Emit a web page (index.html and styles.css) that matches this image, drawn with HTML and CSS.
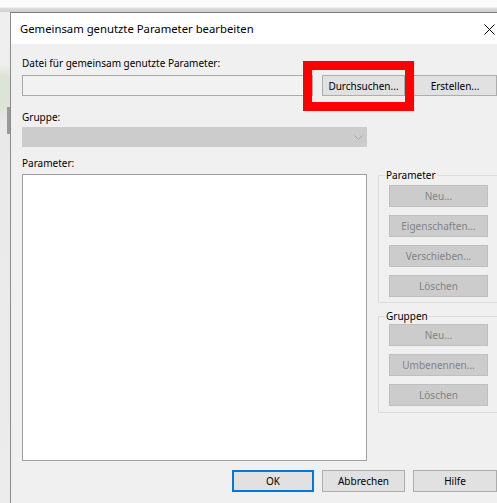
FILE: index.html
```html
<!DOCTYPE html>
<html lang="de">
<head>
<meta charset="utf-8">
<title>Gemeinsam genutzte Parameter bearbeiten</title>
<link rel="stylesheet" href="styles.css">
</head>
<body>
<div class="desk">
  <div class="desk-top"></div>
  <div class="desk-row">
    <div class="desk-side"></div>
    <div class="dialog">
      <div class="titlebar">
        <span class="title">Gemeinsam genutzte Parameter bearbeiten</span>
        <svg class="close" width="11" height="11" viewBox="0 0 11 11" aria-hidden="true">
          <path d="M0.5 0.5 L10.5 10.5 M10.5 0.5 L0.5 10.5" stroke="#000" stroke-width="1" fill="none"/>
        </svg>
      </div>
      <div class="content">
        <div class="label label-file">Datei für gemeinsam genutzte Parameter:</div>
        <div class="file-row">
          <div class="field"></div>
          <div class="btn-mark">
            <button class="btn btn-browse">Durchsuchen...</button>
            <span class="highlight"></span>
          </div>
          <button class="btn btn-create">Erstellen...</button>
        </div>
        <div class="main">
          <div class="left">
            <div class="label label-group">Gruppe:</div>
            <div class="combo">
              <svg class="chevron" width="9" height="5" viewBox="0 0 9 5" aria-hidden="true">
                <path d="M0.5 0.5 L4.5 4.5 L8.5 0.5" stroke="#a6a6a6" stroke-width="1" fill="none"/>
              </svg>
            </div>
            <div class="label label-param">Parameter:</div>
            <div class="listbox"></div>
          </div>
          <div class="right">
            <fieldset class="group group-params">
              <legend>Parameter</legend>
              <button class="btn btn-side" disabled>Neu...</button>
              <button class="btn btn-side" disabled>Eigenschaften...</button>
              <button class="btn btn-side" disabled>Verschieben...</button>
              <button class="btn btn-side" disabled>Löschen</button>
            </fieldset>
            <fieldset class="group group-groups">
              <legend>Gruppen</legend>
              <button class="btn btn-side" disabled>Neu...</button>
              <button class="btn btn-side" disabled>Umbenennen...</button>
              <button class="btn btn-side" disabled>Löschen</button>
            </fieldset>
          </div>
        </div>
        <div class="footer">
          <button class="btn btn-ok">OK</button>
          <button class="btn btn-cancel">Abbrechen</button>
          <button class="btn btn-help">Hilfe</button>
        </div>
      </div>
    </div>
  </div>
</div>
</body>
</html>
```

FILE: styles.css
```css
html, body {
  margin: 0;
  padding: 0;
}

body {
  width: 497px;
  height: 503px;
  overflow: hidden;
  background: #f3f3f3;
  font-family: "Noto Sans", "DejaVu Sans", sans-serif;
  font-size: 10px;
  color: #000;
}

.desk {
  display: flex;
  flex-direction: column;
  height: 503px;
}

.desk-top {
  height: 12px;
  flex: none;
  background: linear-gradient(to bottom, #fbfbfb 0, #fbfbfb 7px, #dedede 8px, #d2d2d2 11px, #cfcfcf 12px);
}

.desk-row {
  display: flex;
  flex: 1;
}

.desk-side {
  width: 10px;
  flex: none;
  background:
    linear-gradient(to bottom, transparent 0, transparent 95px, #9a9a9a 95px, #9a9a9a 122px, transparent 122px) 7px 0 / 3px 100% no-repeat,
    linear-gradient(to bottom, #efefef 0, #efefef 52px, #dde3d6 64px, #dde3d6 95px, #e9e9e9 110px, #ececec 100%);
}

.dialog {
  width: 486px;
  flex: none;
  border-left: 1px solid #8b8b8b;
  border-top: 1px solid #7d7d7d;
  background: #f0f0f0;
  display: flex;
  flex-direction: column;
}

.titlebar {
  height: 31px;
  flex: none;
  background: #fff;
  display: flex;
  align-items: center;
  justify-content: space-between;
  padding: 0 2px 0 9px;
}

.title {
  font-size: 11.3px;
  color: #000;
}

.close {
  display: block;
  margin-top: 1px;
}

.content {
  padding-left: 11px;
  display: flex;
  flex-direction: column;
}

.label {
  height: 16px;
  line-height: 16px;
  white-space: nowrap;
}

.label-file {
  margin-top: 11px;
}

.file-row {
  display: flex;
  margin-top: 4px;
  height: 21px;
}

.field {
  width: 289px;
  height: 19px;
  border: 1px solid #a9a9a9;
  background: #f2f2f2;
}

.btn {
  font-family: inherit;
  font-size: 10px;
  color: #000;
  background: #e1e1e1;
  border: 1px solid #adadad;
  border-radius: 0;
  padding: 0;
  margin: 0;
  height: 22px;
  box-sizing: border-box;
  white-space: nowrap;
}

.btn-mark {
  position: relative;
  margin-left: 9px;
  display: flex;
}

.btn-browse {
  width: 83px;
  height: 21px;
}

.highlight {
  position: absolute;
  left: -19px;
  top: -14px;
  width: 111px;
  height: 50px;
  box-sizing: border-box;
  border: 9px solid #ff0000;
  pointer-events: none;
}

.btn-create {
  width: 84px;
  height: 21px;
  margin-left: 8px;
}

.main {
  display: flex;
  gap: 11px;
}

.left {
  width: 345px;
  display: flex;
  flex-direction: column;
}

.label-group {
  margin-top: 13px;
}

.combo {
  margin-top: 2px;
  height: 20px;
  background: #cccccc;
  display: flex;
  align-items: center;
  justify-content: flex-end;
  padding-right: 4px;
}

.chevron {
  display: block;
  margin-top: 1px;
}

.label-param {
  margin-top: 8px;
}

.listbox {
  margin-top: 3px;
  height: 285px;
  background: #fff;
  border: 1px solid #a0a0a0;
}

.right {
  width: 119px;
  margin-top: 71px;
  display: flex;
  flex-direction: column;
}

.group {
  margin: 0;
  padding: 2px 0 5px 10px;
  border: 1px solid #dcdcdc;
  border-right: 0;
  min-width: 0;
  display: flex;
  flex-direction: column;
  gap: 8px;
}

.group legend {
  padding: 0 1px;
  margin-left: -4px;
  height: 16px;
  line-height: 16px;
  font-size: 10px;
}

.group-groups {
  margin-top: 5px;
  padding-top: 0;
  padding-bottom: 6px;
}

.btn-side {
  width: 99px;
  height: 22px;
  background: #cccccc;
  border-color: #bfbfbf;
  color: #838383;
}

.footer {
  display: flex;
  justify-content: flex-end;
  gap: 8px;
  margin-top: 9px;
}

.btn-ok {
  width: 82px;
  border: 2px solid #0078d7;
}

.btn-cancel {
  width: 83px;
}

.btn-help {
  width: 84px;
}
```
